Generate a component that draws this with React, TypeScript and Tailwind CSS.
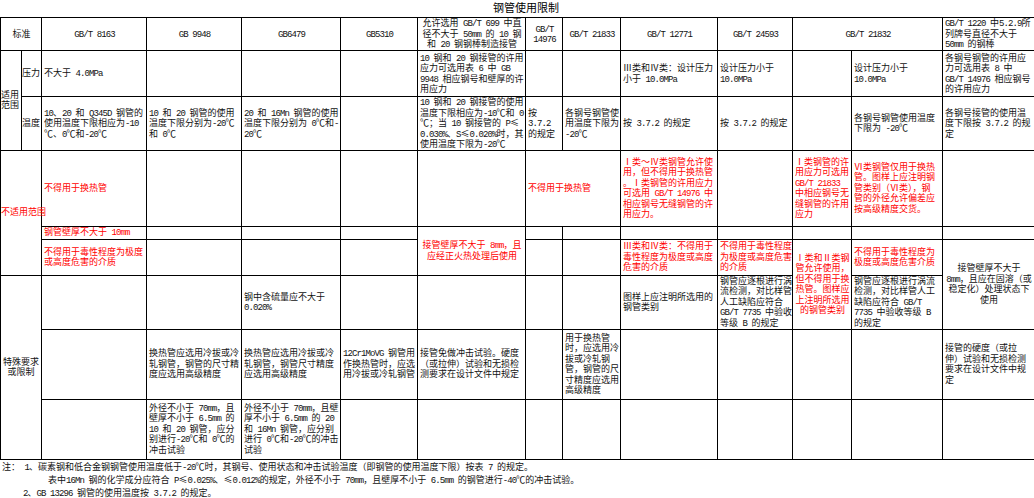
import clsx from "clsx";

// ASCII runs get a half-width monospace look, the rest falls to the CJK font
function Txt({ s }: { s: string }) {
  return (
    <>
      {s.split(/([ -~]+)/).map((p, i) =>
        /^[ -~]+$/.test(p) ? (
          <span key={i} className="font-['Liberation_Mono',monospace] tracking-[-0.9px] leading-[0px]">
            {p}
          </span>
        ) : (
          p
        )
      )}
    </>
  );
}

type CellProps = {
  t?: string;
  red?: boolean;
  center?: boolean;
  colSpan?: number;
  rowSpan?: number;
  flush?: boolean;
};

function Cell({ t = "", red, center, colSpan, rowSpan, flush }: CellProps) {
  return (
    <td
      colSpan={colSpan}
      rowSpan={rowSpan}
      className={clsx(
        "border border-black py-0 align-middle whitespace-pre",
        flush ? "px-0" : "pl-[2px] pr-[1px]",
        center ? "text-center" : "text-left",
        red ? "text-[#ff0000]" : "text-[#111]"
      )}
    >
      <Txt s={t} />
    </td>
  );
}

export default function App() {
  return (
    <div className="w-[1034px] h-[498px] bg-white font-['Noto_Sans_CJK_SC',sans-serif] text-black overflow-hidden">
      {/* Title */}
      <div className="h-[17px] pl-[18px] text-center text-[11px] leading-[14px]">钢管使用限制</div>

      <table className="w-[1034px] table-fixed border-collapse text-[9px] leading-[10.5px]">
        <colgroup>
          <col className="w-[21px]" />
          <col className="w-[20px]" />
          <col className="w-[105px]" />
          <col className="w-[95px]" />
          <col className="w-[99px]" />
          <col className="w-[77px]" />
          <col className="w-[108px]" />
          <col className="w-[37px]" />
          <col className="w-[58px]" />
          <col className="w-[97px]" />
          <col className="w-[75px]" />
          <col className="w-[59px]" />
          <col className="w-[91px]" />
          <col className="w-[92px]" />
        </colgroup>
        <tbody>
          {/* header */}
          <tr className="h-[33px]">
            <Cell colSpan={2} center t="标准" />
            <Cell center t="GB/T 8163" />
            <Cell center t="GB 9948" />
            <Cell center t="GB6479" />
            <Cell center t="GB5310" />
            <Cell center t={"允许选用 GB/T 699 中直\n径不大于 50mm 的 10 钢\n和 20 钢钢棒制造接管"} />
            <Cell center t={"GB/T\n14976"} />
            <Cell center t="GB/T 21833" />
            <Cell center t="GB/T 12771" />
            <Cell center t="GB/T 24593" />
            <Cell colSpan={2} center t="GB/T 21832" />
            <Cell t={"GB/T 1220 中5.2.9所\n列牌号直径不大于\n50mm 的钢棒"} />
          </tr>

          {/* 适用范围 - 压力 */}
          <tr className="h-[46px]">
            <Cell rowSpan={2} flush t={"适用\n范围"} />
            <Cell flush t="压力" />
            <Cell t="不大于 4.0MPa" />
            <Cell />
            <Cell />
            <Cell />
            <Cell t={"10 钢和 20 钢接管的许用\n应力可选用表 6 中 GB\n9948 相应钢号和壁厚的许\n用应力"} />
            <Cell />
            <Cell />
            <Cell t={"Ⅲ类和Ⅳ类：设计压力\n小于 10.0MPa"} />
            <Cell t={"设计压力小于\n10.0MPa"} />
            <Cell />
            <Cell t={"设计压力小于\n10.0MPa"} />
            <Cell t={"各钢号钢管的许用应\n力可选用表 8 中\nGB/T 14976 相应钢号\n的许用应力"} />
          </tr>

          {/* 适用范围 - 温度 */}
          <tr className="h-[53px]">
            <Cell flush t="温度" />
            <Cell t={"10、20 和 Q345D 钢管的\n使用温度下限相应为-10\n℃、0℃和-20℃"} />
            <Cell t={"10 和 20 钢管的使用\n温度下限分别为-20℃\n和 0℃"} />
            <Cell t={"20 和 16Mn 钢管的使用\n温度下限分别为 0℃和-\n20℃"} />
            <Cell />
            <Cell t={"10 钢和 20 钢接管的使用\n温度下限相应为-10℃和 0\n℃；当 10 钢接管的 P≤\n0.030%、S≤0.020%时，其\n使用温度下限为-20℃"} />
            <Cell t={"按\n3.7.2\n的规定"} />
            <Cell t={"各钢号钢管使\n用温度下限为\n-20℃"} />
            <Cell t="按 3.7.2 的规定" />
            <Cell t="按 3.7.2 的规定" />
            <Cell />
            <Cell t={"各钢号钢管使用温度\n下限为 -20℃"} />
            <Cell t={"各钢号接管的使用温\n度下限按 3.7.2 的规\n定"} />
          </tr>

          {/* 不适用范围 - 换热管 */}
          <tr className="h-[76px]">
            <Cell colSpan={2} rowSpan={3} red flush t="不适用范围" />
            <Cell red t="不得用于换热管" />
            <Cell />
            <Cell />
            <Cell />
            <Cell />
            <Cell colSpan={2} red t="不得用于换热管" />
            <Cell red t={"Ⅰ类～Ⅳ类钢管允许使\n用，但不得用于换热管\n。Ⅰ类钢管的许用应力\n可选用 GB/T 14976 中\n相应钢号无缝钢管的许\n用应力。"} />
            <Cell />
            <Cell red t={"Ⅰ类钢管的许\n用应力可选用\nGB/T 21833\n中相应钢号无\n缝钢管的许用\n应力"} />
            <Cell red t={"Ⅵ类钢管仅用于换热\n管。图样上应注明钢\n管类别（Ⅵ类），钢\n管的外径允许偏差应\n按高级精度交货。"} />
            <Cell />
          </tr>

          {/* 不适用范围 - 壁厚 */}
          <tr className="h-[13px]">
            <Cell red t="钢管壁厚不大于 10mm" />
            <Cell />
            <Cell />
            <Cell />
            <Cell rowSpan={2} red center t={"接管壁厚不大于 8mm，且\n应经正火热处理后使用"} />
            <Cell />
            <Cell />
            <Cell />
            <Cell />
            <Cell />
            <Cell />
            <Cell />
          </tr>

          {/* 不适用范围 - 毒性 */}
          <tr className="h-[36px]">
            <Cell red t={"不得用于毒性程度为极度\n或高度危害的介质"} />
            <Cell />
            <Cell />
            <Cell />
            <Cell />
            <Cell />
            <Cell red t={"Ⅲ类和Ⅳ类：不得用于\n毒性程度为极度或高度\n危害的介质"} />
            <Cell red t={"不得用于毒性程度\n为极度或高度危害\n的介质"} />
            <Cell rowSpan={2} red center t={"Ⅰ类和Ⅱ类钢\n管允许使用，\n但不得用于换\n热管。图样应\n上注明所选用\n的钢管类别"} />
            <Cell red t={"不得用于毒性程度为\n极度或高度危害介质"} />
            <Cell rowSpan={2} center t={"接管壁厚不大于\n8mm，且应在固溶（或\n稳定化）处理状态下\n使用"} />
          </tr>

          {/* 特殊要求或限制 1 */}
          <tr className="h-[54px]">
            <Cell colSpan={2} rowSpan={3} center flush t={"特殊要求\n或限制"} />
            <Cell />
            <Cell />
            <Cell t={"钢中含硫量应不大于\n0.020%"} />
            <Cell />
            <Cell />
            <Cell />
            <Cell />
            <Cell t={"图样上应注明所选用的\n钢管类别"} />
            <Cell t={"钢管应逐根进行涡\n流检测，对比样管\n人工缺陷应符合\nGB/T 7735 中验收\n等级 B 的规定"} />
            <Cell t={"钢管应逐根进行涡流\n检测，对比样管人工\n缺陷应符合 GB/T\n7735 中验收等级 B\n的规定"} />
          </tr>

          {/* 特殊要求或限制 2 */}
          <tr className="h-[70px]">
            <Cell />
            <Cell t={"换热管应选用冷拔或冷\n轧钢管，钢管的尺寸精\n度应选用高级精度"} />
            <Cell t={"换热管应选用冷拔或冷\n轧钢管，钢管尺寸精度\n应选用高级精度"} />
            <Cell t={"12Cr1MoVG 钢管用\n作换热管时，应选\n用冷拔或冷轧钢管"} />
            <Cell t={"接管免做冲击试验。硬度\n（或拉伸）试验和无损检\n测要求在设计文件中规定"} />
            <Cell />
            <Cell t={"用于换热管\n时，应选用冷\n拔或冷轧钢\n管，钢管的尺\n寸精度应选用\n高级精度"} />
            <Cell />
            <Cell />
            <Cell />
            <Cell />
            <Cell t={"接管的硬度（或拉\n伸）试验和无损检测\n要求在设计文件中规\n定"} />
          </tr>

          {/* 特殊要求或限制 3 */}
          <tr className="h-[60px]">
            <Cell />
            <Cell t={"外径不小于 70mm，且\n壁厚不小于 6.5mm 的\n10 和 20 钢管，应分\n别进行-20℃和 0℃的\n冲击试验"} />
            <Cell t={"外径不小于 70mm，且壁\n厚不小于 6.5mm 的 20\n和 16Mn 钢管，应分别\n进行 0℃和-20℃的冲击\n试验"} />
            <Cell />
            <Cell />
            <Cell />
            <Cell />
            <Cell />
            <Cell />
            <Cell />
            <Cell />
            <Cell />
          </tr>
        </tbody>
      </table>

      {/* Notes */}
      <div className="text-[9px] leading-[13px] whitespace-pre text-[#111]">
        <div className="pl-[2px]">
          <Txt s="注： 1、碳素钢和低合金钢钢管使用温度低于-20℃时，其钢号、使用状态和冲击试验温度（即钢管的使用温度下限）按表 7 的规定。" />
        </div>
        <div className="pl-[48px]">
          <Txt s="表中16Mn 钢的化学成分应符合 P≤0.025%、≤0.012%的规定，外径不小于 70mm，且壁厚不小于 6.5mm 的钢管进行-40℃的冲击试验。" />
        </div>
        <div className="pl-[23px]">
          <Txt s="2、GB 13296 钢管的使用温度按 3.7.2 的规定。" />
        </div>
      </div>
    </div>
  );
}
